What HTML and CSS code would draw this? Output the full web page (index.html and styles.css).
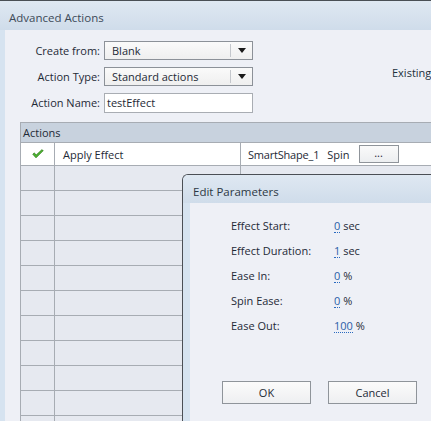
FILE: index.html
```html
<!DOCTYPE html>
<html>
<head>
<meta charset="utf-8">
<link rel="stylesheet" href="styles.css">
</head>
<body>
<div class="window">
  <div class="titlebar">Advanced Actions</div>
  <div class="frame">
    <div class="content">
      <div class="top">
        <div class="form">
          <div class="row">
            <span class="lbl">Create from:</span>
            <div class="select"><span class="val">Blank</span><span class="sep"></span><span class="arrow"></span></div>
          </div>
          <div class="row">
            <span class="lbl">Action Type:</span>
            <div class="select"><span class="val">Standard actions</span><span class="sep"></span><span class="arrow"></span></div>
          </div>
          <div class="row">
            <span class="lbl">Action Name:</span>
            <div class="input">testEffect</div>
          </div>
        </div>
        <div class="existing">Existing</div>
      </div>
      <div class="table">
        <div class="thead">Actions</div>
        <div class="tr first">
          <div class="c1"><svg width="12" height="10" viewBox="0 0 12 10"><path d="M0.8 5.2 L4 8.8 L11.2 1.6 L9.8 0.8 L4 6.2 L2.4 3.9 Z" fill="#4cb82e" stroke="#2e7d1a" stroke-width="0.8" stroke-linejoin="round"/></svg></div>
          <div class="c2">Apply Effect</div>
          <div class="c3"><span class="obj">SmartShape_1</span><span class="eff">Spin</span><span class="dots">...</span></div>
        </div>
        <div class="tr"><div class="c1"></div><div class="c2"></div><div class="c3"></div></div>
        <div class="tr"><div class="c1"></div><div class="c2"></div><div class="c3"></div></div>
        <div class="tr"><div class="c1"></div><div class="c2"></div><div class="c3"></div></div>
        <div class="tr"><div class="c1"></div><div class="c2"></div><div class="c3"></div></div>
        <div class="tr"><div class="c1"></div><div class="c2"></div><div class="c3"></div></div>
        <div class="tr"><div class="c1"></div><div class="c2"></div><div class="c3"></div></div>
        <div class="tr"><div class="c1"></div><div class="c2"></div><div class="c3"></div></div>
        <div class="tr"><div class="c1"></div><div class="c2"></div><div class="c3"></div></div>
        <div class="tr"><div class="c1"></div><div class="c2"></div><div class="c3"></div></div>
        <div class="tr"><div class="c1"></div><div class="c2"></div><div class="c3"></div></div>
        <div class="tr"><div class="c1"></div><div class="c2"></div><div class="c3"></div></div>
      </div>
    </div>
  </div>
</div>

<div class="dialog">
  <div class="dtitle">Edit Parameters</div>
  <div class="dframe">
    <div class="dcontent">
      <div class="params">
        <div class="prow"><span class="plbl">Effect Start:</span><span class="pval"><span class="num">0</span> sec</span></div>
        <div class="prow"><span class="plbl">Effect Duration:</span><span class="pval"><span class="num">1</span> sec</span></div>
        <div class="prow"><span class="plbl">Ease In:</span><span class="pval"><span class="num">0</span> %</span></div>
        <div class="prow"><span class="plbl">Spin Ease:</span><span class="pval"><span class="num">0</span> %</span></div>
        <div class="prow"><span class="plbl">Ease Out:</span><span class="pval"><span class="num">100</span> %</span></div>
      </div>
      <div class="buttons">
        <div class="btn">OK</div>
        <div class="btn">Cancel</div>
      </div>
    </div>
  </div>
</div>
</body>
</html>
```

FILE: styles.css
```css
html, body {
  margin: 0;
  padding: 0;
}
body {
  width: 431px;
  height: 421px;
  overflow: hidden;
  position: relative;
  font-family: "Open Sans", "Noto Sans", sans-serif;
  font-size: 11px;
  color: #1e2a36;
  background: #d6e3f0;
}
.window {
  border-top: 1px solid #4a4f55;
  height: 420px;
  display: flex;
  flex-direction: column;
  overflow: hidden;
}
.titlebar {
  height: 29px;
  flex-shrink: 0;
  line-height: 33px;
  padding-left: 9px;
  font-size: 11.5px;
  color: #3c4a58;
  background: linear-gradient(#dfe8f2, #cfdcea);
}
.frame {
  flex: 1;
  padding-left: 5px;
  background: #d6e3f0;
  display: flex;
  overflow: hidden;
}
.content {
  flex: 1;
  background: #eef0f6;
  display: flex;
  flex-direction: column;
  overflow: hidden;
}
.top {
  display: flex;
  flex-shrink: 0;
  padding-top: 10px;
  height: 82px;
}
.form {
  display: flex;
  flex-direction: column;
  gap: 6px;
}
.row {
  display: flex;
  align-items: center;
  gap: 4px;
  height: 20px;
}
.lbl {
  width: 95px;
  text-align: right;
  color: #1e2a36;
}
.select {
  width: 147px;
  height: 17px;
  border: 1px solid #8c9198;
  background: linear-gradient(#fafafa, #efefef);
  display: flex;
  align-items: center;
}
.val {
  flex: 1;
  padding-left: 7px;
  line-height: 17px;
}
.sep {
  width: 1px;
  height: 13px;
  background: #c4c7cc;
}
.arrow {
  width: 0;
  height: 0;
  border-left: 4px solid transparent;
  border-right: 4px solid transparent;
  border-top: 5px solid #1a1a1a;
  margin: 1px 6px 0 7px;
}
.input {
  width: 145px;
  height: 18px;
  line-height: 18px;
  padding-left: 2px;
  border: 1px solid #a9adb3;
  background: #fff;
  margin-top: 1px;
}
.existing {
  margin-left: 139px;
  margin-top: 25px;
  color: #22303c;
}
.table {
  flex-shrink: 0;
  margin-left: 15px;
  border-top: 1px solid #a7acb3;
  border-left: 1px solid #a7acb3;
  display: flex;
  flex-direction: column;
}
.thead {
  height: 19px;
  line-height: 19px;
  padding-left: 2px;
  background: #c8d2de;
  border-bottom: 1px solid #a7acb3;
}
.tr {
  display: flex;
  height: 24px;
  border-bottom: 1px solid #a7acb3;
  background: #e6e9f0;
  flex-shrink: 0;
}
.tr.first {
  height: 22px;
  background: #fff;
}
.c1 {
  width: 33px;
  border-right: 1px solid #a7acb3;
  display: flex;
  align-items: center;
  justify-content: center;
}
.c2 {
  width: 177px;
  padding-left: 8px;
  border-right: 1px solid #a7acb3;
  display: flex;
  align-items: center;
}
.c3 {
  flex: 1;
  display: flex;
  align-items: center;
  padding-left: 7px;
}
.obj {
  margin-right: 8px;
  letter-spacing: -0.2px;
}
.eff {
  margin-right: 9px;
}
.dots {
  width: 38px;
  height: 16px;
  border: 1px solid #8f949a;
  background: linear-gradient(#fafafa, #eceef0);
  text-align: center;
  line-height: 13px;
  font-size: 11px;
}
.dialog {
  position: absolute;
  left: 182px;
  top: 174px;
  width: 248px;
  height: 246px;
  border-top: 1px solid #4b4f55;
  border-left: 1px solid #4b4f55;
  border-top-left-radius: 6px;
  background: #d6e3f0;
  display: flex;
  flex-direction: column;
  overflow: hidden;
}
.dtitle {
  height: 28px;
  line-height: 33px;
  padding-left: 10px;
  font-size: 11.5px;
  color: #2c3844;
  background: linear-gradient(#dfe8f2, #cfdcea);
}
.dframe {
  flex: 1;
  padding-left: 7px;
  display: flex;
}
.dcontent {
  flex: 1;
  background: #eef0f6;
  display: flex;
  flex-direction: column;
}
.params {
  padding-top: 10px;
  padding-left: 41px;
  display: flex;
  flex-direction: column;
}
.prow {
  display: flex;
  height: 25px;
  align-items: center;
}
.plbl {
  width: 103px;
}
.num {
  color: #2a5ea8;
  border-bottom: 1px dotted #2a6ac0;
  line-height: 12px;
  display: inline-block;
}
.buttons {
  display: flex;
  gap: 17px;
  margin-left: 32px;
  margin-top: 43px;
}
.btn {
  width: 87px;
  height: 21px;
  border: 1px solid #8f949a;
  background: linear-gradient(#fbfbfb, #eeeff1);
  text-align: center;
  line-height: 21px;
}
```
